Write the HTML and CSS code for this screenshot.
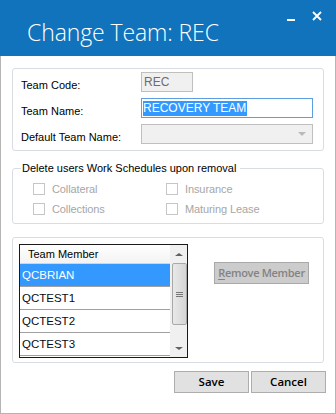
FILE: index.html
```html
<!DOCTYPE html>
<html>
<head>
<meta charset="utf-8">
<link rel="stylesheet" href="styles.css">
</head>
<body>
<div class="window">
  <div class="titlebar">
    <div class="title">Change Team: REC</div>
    <div class="controls">
      <svg class="ctl min" width="10" height="10" viewBox="0 0 10 10"><rect x="1" y="7" width="8" height="2" fill="#fff"/></svg>
      <svg class="ctl close" width="10" height="10" viewBox="0 0 10 10"><path d="M1 1 L9 9 M9 1 L1 9" stroke="#fff" stroke-width="1.8"/></svg>
    </div>
  </div>
  <div class="content">
    <div class="panel fields">
      <div class="row">
        <span class="label">Team Code:</span>
        <span class="input disabled small">REC</span>
      </div>
      <div class="row">
        <span class="label">Team Name:</span>
        <span class="input focused"><span class="sel">RECOVERY TEAM</span></span>
      </div>
      <div class="row">
        <span class="label">Default Team Name:</span>
        <span class="input disabled combo"><span class="arrow"></span></span>
      </div>
    </div>

    <fieldset class="group">
      <legend>Delete users Work Schedules upon removal</legend>
      <div class="checks">
        <label class="check"><span class="box"></span>Collateral</label>
        <label class="check"><span class="box"></span>Insurance</label>
        <label class="check"><span class="box"></span>Collections</label>
        <label class="check"><span class="box"></span>Maturing Lease</label>
      </div>
    </fieldset>

    <div class="panel members">
      <div class="list">
        <div class="list-main">
          <div class="header">Team Member</div>
          <div class="item selected">QCBRIAN</div>
          <div class="item">QCTEST1</div>
          <div class="item">QCTEST2</div>
          <div class="item">QCTEST3</div>
        </div>
        <div class="scrollbar">
          <span class="sarrow up"></span>
          <span class="thumb"><span class="grip"></span></span>
          <span class="sarrow down"></span>
        </div>
      </div>
      <div class="remove"><span class="btn disabled-btn"><u>R</u>emove Member</span></div>
    </div>

    <div class="buttons">
      <span class="btn">Save</span>
      <span class="btn">Cancel</span>
    </div>
  </div>
</div>
</body>
</html>
```

FILE: styles.css
```css
* { box-sizing: border-box; }
html, body { margin: 0; padding: 0; background: #fff; }
body { font-family: "Liberation Sans", Arial, sans-serif; font-size: 11px; color: #000; }

.window {
  width: 336px;
  height: 414px;
  border: 1px solid #b4b4b4;
  border-top: none;
  background: #fff;
  display: flex;
  flex-direction: column;
}

.titlebar {
  height: 56px;
  background: #1173bc;
  margin: 0 -1px;
  display: flex;
  justify-content: space-between;
  align-items: flex-start;
  color: #fff;
}
.title {
  font-family: "Open Sans", sans-serif;
  font-weight: 300;
  font-size: 23px;
  padding: 19px 0 0 27px;
  line-height: 26px;
  letter-spacing: -0.1px;
}
.controls {
  display: flex;
  gap: 16px;
  padding: 11px 14px 0 0;
}
.ctl { display: block; }
.min { margin-top: 1px; }

.content {
  padding: 12px 11px 0 11px;
  display: flex;
  flex-direction: column;
}

.panel {
  border: 1px solid #d7dde2;
  border-radius: 3px;
}

.fields {
  height: 83px;
  padding: 3px 10px 0 8px;
  display: flex;
  flex-direction: column;
  gap: 6px;
}
.row {
  display: flex;
  align-items: center;
  height: 20px;
}
.label {
  width: 120px;
  padding-top: 5px;
}
.input {
  height: 20px;
  width: 172px;
  border: 1px solid #abadb3;
  background: #fff;
  display: flex;
  align-items: center;
  padding-left: 1px;
  position: relative;
}
.input.small { width: 52px; }
.input.disabled {
  background: #f0f0f0;
  border-color: #bfbfbf;
  color: #6d6d6d;
  padding-left: 2px;
  font-size: 12px;
}
.input.focused {
  border-color: #5c9ee0;
  font-size: 12px;
}
.sel {
  background: #3399ff;
  color: #fff;
  line-height: 15px;
  padding: 0 1px 0 0;
}
.combo .arrow {
  position: absolute;
  right: 6px;
  top: 7px;
  width: 0;
  height: 0;
  border-left: 4px solid transparent;
  border-right: 4px solid transparent;
  border-top: 4px solid #b9b9b9;
}
.combo { border-color: #c7c7c7; }

.group {
  margin: 11px 0 0 0;
  padding: 8px 0 0 20px;
  height: 62px;
  border: 1px solid #d7dde2;
  border-radius: 3px;
  min-width: 0;
}
.group legend {
  padding: 0 4px 0 1px;
  margin-left: -12px;
  line-height: 13px;
  font-size: 11px;
}
.checks {
  display: grid;
  grid-template-columns: 133px 120px;
  row-gap: 8px;
}
.check {
  display: flex;
  align-items: center;
  color: #a6a6a6;
  height: 12px;
  letter-spacing: -0.1px;
}
.box {
  width: 12px;
  height: 12px;
  border: 1px solid #c6c6c6;
  background: #fff;
  margin-right: 7px;
  flex: none;
}

.members {
  margin-top: 13px;
  height: 126px;
  padding: 6px 0 0 6px;
  display: flex;
  align-items: flex-start;
}
.list {
  width: 169px;
  height: 114px;
  border: 1px solid #1a1a1a;
  display: flex;
  overflow: hidden;
}
.list-main {
  flex: 1;
  display: flex;
  flex-direction: column;
}
.header {
  height: 19px;
  line-height: 19px;
  padding-left: 8px;
  font-size: 11px;
  background: linear-gradient(#fff, #f3f3f3);
  border-bottom: 1px solid #d5d5d5;
  flex: none;
}
.item {
  height: 23px;
  line-height: 22px;
  padding-left: 2px;
  border-bottom: 1px solid #a0a0a0;
  font-size: 11.5px;
  flex: none;
  color: #0a0a14;
}
.item.selected {
  background: #3399ff;
  color: #fff;
  border-bottom-color: #a0a0a0;
}
.scrollbar {
  width: 17px;
  flex: none;
  background: #f0f0f0;
  display: flex;
  flex-direction: column;
  align-items: center;
  border-left: 1px solid #f0f0f0;
}
.sarrow {
  width: 0; height: 0;
  border-left: 4px solid transparent;
  border-right: 4px solid transparent;
}
.sarrow.up { border-bottom: 3px solid #606060; margin: 8px 0 7px; }
.sarrow.down { border-top: 3px solid #606060; margin-top: auto; margin-bottom: 7px; }
.thumb {
  width: 15px;
  height: 62px;
  border: 1px solid #a8a8a8;
  border-radius: 2px;
  background: linear-gradient(to right, #e8e8e8, #d6d6d6);
  display: flex;
  align-items: center;
  justify-content: center;
}
.grip {
  width: 7px;
  height: 5px;
  border-top: 1px solid #777;
  border-bottom: 1px solid #777;
  position: relative;
}
.grip::after {
  content: "";
  position: absolute;
  left: 0; right: 0; top: 1px;
  border-top: 1px solid #777;
}

.remove {
  padding: 18px 0 0 26px;
}
.btn {
  display: inline-block;
  text-align: center;
  white-space: nowrap;
  height: 22px;
  line-height: 20px;
  width: 75px;
  border: 1px solid #adadad;
  background: #e1e1e1;
  font-family: "Open Sans", sans-serif;
  font-weight: 600;
  font-size: 11.5px;
  color: #000;
}
.disabled-btn {
  width: 95px;
  background: #cccccc;
  border-color: #a9a9a9;
  color: #838383;
  font-size: 11px;
  letter-spacing: -0.3px;
}
.disabled-btn u { text-decoration-thickness: 1px; text-underline-offset: 2px; }

.buttons {
  display: flex;
  justify-content: flex-end;
  gap: 2px;
  margin-top: 8px;
  margin-right: -2px;
}
```
